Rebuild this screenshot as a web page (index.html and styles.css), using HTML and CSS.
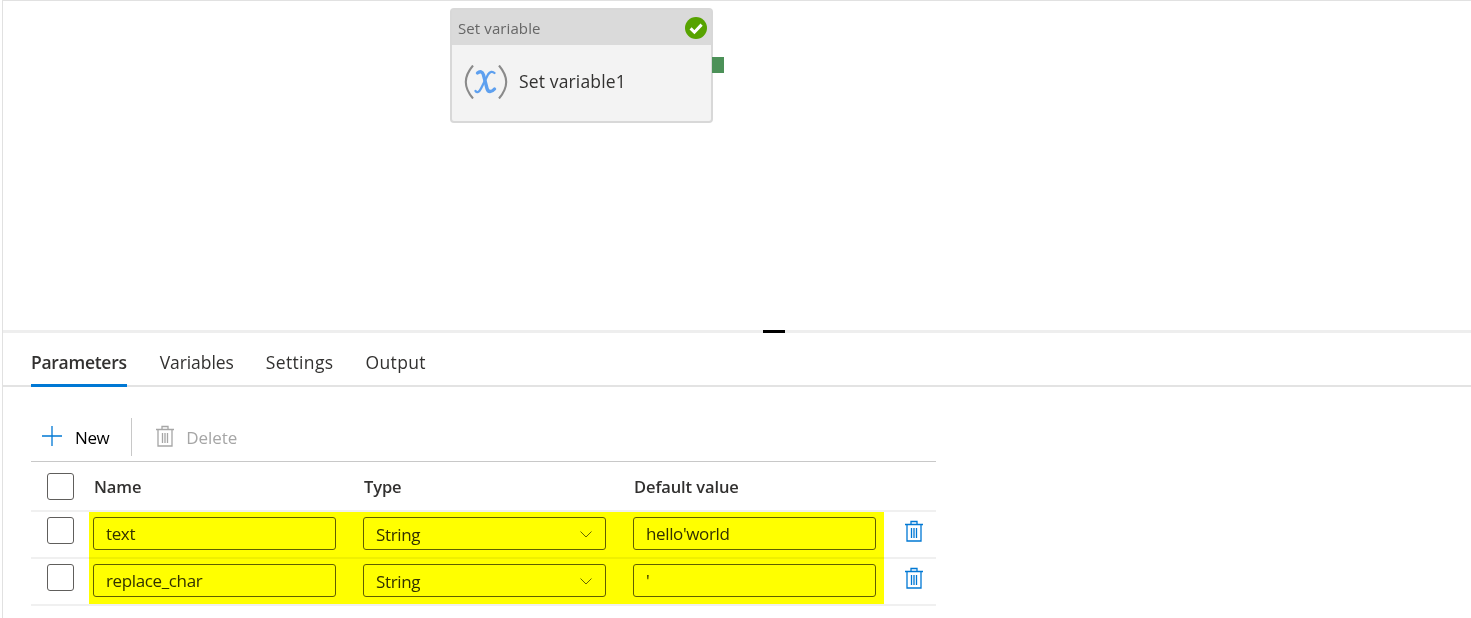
FILE: index.html
```html
<!DOCTYPE html>
<html lang="en">
<head>
<meta charset="utf-8">
<title>Set variable</title>
<link rel="stylesheet" href="styles.css">
</head>
<body>
<div class="app">
  <section class="canvas">
    <div class="node">
      <div class="node-head">
        <span>Set variable</span>
        <svg class="ok" viewBox="0 0 22 22" width="22" height="22"><circle cx="11" cy="11" r="11" fill="#57a300"/><path d="M5.600 11.400l3.800 3.800 7.200-7.600" fill="none" stroke="#fff" stroke-width="3"/></svg>
      </div>
      <div class="node-body">
        <svg class="fx" viewBox="0 0 44 34" width="44" height="34">
          <path d="M9 .5C3.500 7 1.800 12 1.800 17S3.500 27 9 33.500M35 .5C40.500 7 42.200 12 42.200 17S40.500 27 35 33.500" fill="none" stroke="#8a8a8a" stroke-width="2.100"/>
          <path d="M13.500 8C16 6 18.500 6.500 19.500 10L23 23.500C24 27.500 27.500 27.500 30.500 24" fill="none" stroke="#5ea0ef" stroke-width="3.400" stroke-linecap="round"/>
          <path d="M30.500 8C28.500 6 26 6.500 24 9.500L17 23.500C15 27.500 13 28 11.500 26" fill="none" stroke="#5ea0ef" stroke-width="2.300" stroke-linecap="round"/>
        </svg>
        <span class="node-name">Set variable1</span>
      </div>
      <span class="port"></span>
    </div>
  </section>
  <div class="splitter"><span class="grip"></span></div>
  <nav class="tabs">
    <a class="tab active">Parameters</a>
    <a class="tab">Variables</a>
    <a class="tab">Settings</a>
    <a class="tab">Output</a>
  </nav>
  <section class="panel">
    <div class="toolbar">
      <button class="tool">
        <svg viewBox="0 0 20 20" width="20" height="20"><path d="M10 0v20M0 10h20" stroke="#0078d4" stroke-width="1.300" fill="none"/></svg>
        <span>New</span>
      </button>
      <span class="tool-sep"></span>
      <button class="tool disabled">
        <svg viewBox="0 0 18 22" width="18" height="22"><path d="M0 4.500h18M6 4.500V1.500h6v3M2 4.500v16.500h14V4.500M6.500 8v10M9 8v10M11.500 8v10" fill="none" stroke="#a6a6a6" stroke-width="1.300"/></svg>
        <span>Delete</span>
      </button>
    </div>
    <div class="table">
      <div class="row head">
        <span class="check"></span>
        <span class="cell">Name</span>
        <span class="cell">Type</span>
        <span class="cell">Default value</span>
        <span></span>
      </div>
      <div class="row">
        <span class="check"></span>
        <span class="cell"><span class="field">text</span></span>
        <span class="cell"><span class="field select">String<svg viewBox="0 0 12 7" width="12" height="7"><path d="M.5.5L6 6l5.500-5.500" fill="none" stroke="#666" stroke-width="1"/></svg></span></span>
        <span class="cell"><span class="field">hello'world</span></span>
        <svg class="trash" viewBox="0 0 18 22" width="18" height="22"><path d="M0 4.500h18M6 4.500V1.500h6v3M2 4.500v16.500h14V4.500M6.500 8v10M9 8v10M11.500 8v10" fill="none" stroke="#0078d4" stroke-width="1.300"/></svg>
      </div>
      <div class="row">
        <span class="check"></span>
        <span class="cell"><span class="field">replace_char</span></span>
        <span class="cell"><span class="field select">String<svg viewBox="0 0 12 7" width="12" height="7"><path d="M.5.5L6 6l5.500-5.500" fill="none" stroke="#666" stroke-width="1"/></svg></span></span>
        <span class="cell"><span class="field">'</span></span>
        <svg class="trash" viewBox="0 0 18 22" width="18" height="22"><path d="M0 4.500h18M6 4.500V1.500h6v3M2 4.500v16.500h14V4.500M6.500 8v10M9 8v10M11.500 8v10" fill="none" stroke="#0078d4" stroke-width="1.300"/></svg>
      </div>
      <div class="highlight"></div>
    </div>
  </section>
</div>
</body>
</html>
```
FILE: styles.css
```css
* { box-sizing: border-box; }
html, body { margin: 0; height: 100%; background: #fff; overflow: hidden; }
body { font-family: "Open Sans", "Noto Sans", sans-serif; color: #323130; }
.app { margin-left: 2px; height: 618px; border-left: 1px solid #e1e1e1; border-top: 1px solid #e1e1e1; display: flex; flex-direction: column; }
.canvas { position: relative; height: 329px; flex: none; }
.node { position: absolute; left: 447px; top: 7px; width: 263px; height: 115px; border: 2px solid #d8d8d8; border-radius: 4px; background: #f3f3f3; }
.node-head { height: 35px; background: #dadada; display: flex; align-items: center; justify-content: space-between; padding: 0 4px 0 6px; font-size: 15px; letter-spacing: .1px; color: #666; }
.node-body { display: flex; align-items: center; height: 74px; padding-left: 12px; gap: 11px; }
.fx { flex: none; }
.node-name { font-size: 17.500px; letter-spacing: .15px; padding-bottom: 2px; color: #323130; }
.port { position: absolute; left: 260px; top: 47px; width: 12px; height: 16px; background: #4c9158; }
.splitter { position: relative; height: 3px; flex: none; background: #eeeeee; }
.grip { position: absolute; left: 760px; top: 0; width: 22px; height: 3px; background: #000; }
.tabs { height: 54px; flex: none; display: flex; gap: 32px; padding-left: 28px; border-bottom: 2px solid #e3e3e3; }
.tab { display: flex; align-items: center; height: 54px; padding-top: 6px; font-size: 17.500px; letter-spacing: -.07px; border-bottom: 3px solid transparent; }
.tab:nth-child(3), .tab:nth-child(4) { letter-spacing: .35px; }
.tab.active { font-weight: 600; letter-spacing: -.28px; border-bottom-color: #0078d4; margin-right: 1px; }
.panel { padding: 31px 0 0 28px; }
.toolbar { height: 44px; width: 905px; display: flex; align-items: center; border-bottom: 1px solid #c8c8c8; padding-bottom: 5px; }
.tool { display: flex; align-items: center; gap: 13px; border: 0; background: none; padding: 0 0 0 11px; font: inherit; font-size: 17px; letter-spacing: -.4px; color: #000; }
.tool svg { margin-bottom: 3px; }
.tool.disabled { color: #a6a6a6; padding-left: 24px; gap: 12px; letter-spacing: -.05px; }
.tool-sep { width: 1px; height: 38px; background: #c8c8c8; margin-left: 22px; }
.table { position: relative; width: 905px; }
.row { display: grid; grid-template-columns: 62px 270px 270px 270px 33px; align-items: start; height: 47px; border-bottom: 2px solid #f0f0f0; }
.row.head { height: 50px; align-items: center; font-weight: 600; font-size: 16.500px; letter-spacing: -.1px; }
.row.head .cell { padding-left: 1px; }
.check { width: 27px; height: 27px; margin-left: 16px; border: 1px solid #605e5c; border-radius: 3px; margin-top: 5px; background: #fff; }
.row.head .check { align-self: start; margin-top: 11px; }
.cell { display: block; }
.row .field { margin-top: 5px; }
.field { display: flex; align-items: center; justify-content: space-between; width: 243px; height: 33px; padding: 0 12px; border: 1px solid #605e5c; border-radius: 3px; font-size: 17px; letter-spacing: -.37px; }
.select { padding-top: 2px; }
.select svg { margin-right: 1px; }
.trash { margin: 8px 0 0 2px; }
.highlight { position: absolute; left: 58px; top: 50px; width: 795px; height: 92px; background: #ffff00; mix-blend-mode: multiply; pointer-events: none; }
```
